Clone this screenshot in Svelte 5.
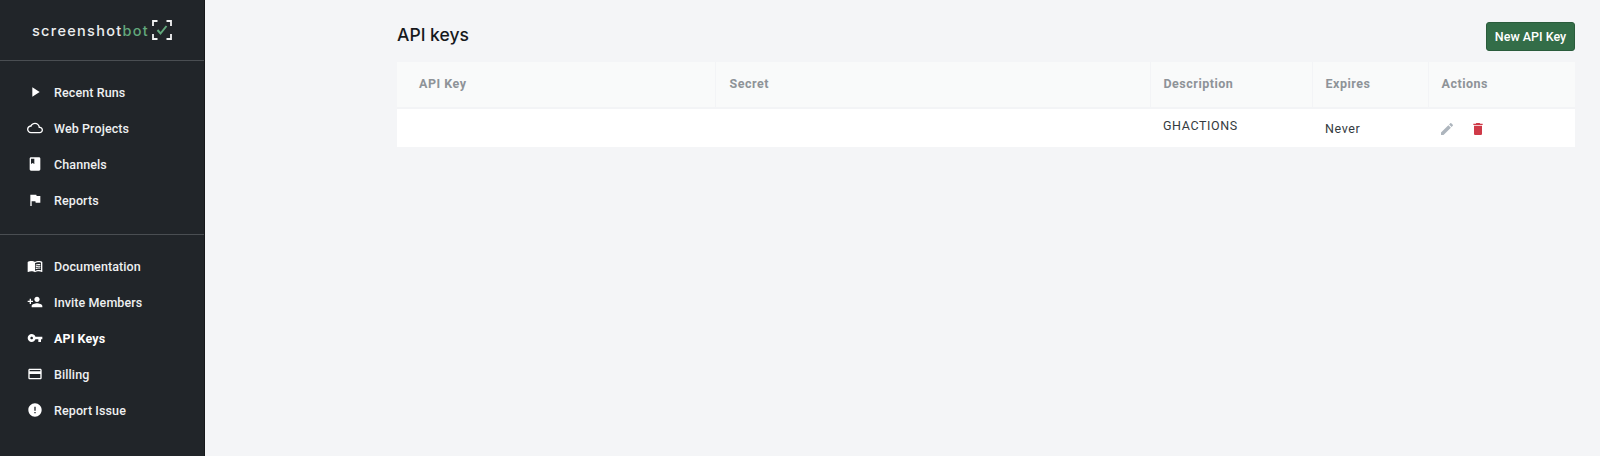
<script>
  const primaryNav = [
    { label: 'Recent Runs', icon: 'play' },
    { label: 'Web Projects', icon: 'cloud' },
    { label: 'Channels', icon: 'book' },
    { label: 'Reports', icon: 'flag' }
  ];
  const secondaryNav = [
    { label: 'Documentation', icon: 'docs' },
    { label: 'Invite Members', icon: 'invite' },
    { label: 'API Keys', icon: 'key', active: true },
    { label: 'Billing', icon: 'card' },
    { label: 'Report Issue', icon: 'alert' }
  ];
  const paths = {
    play: 'M8 5v14l11-7z',
    cloud: 'M19.35 10.04C18.67 6.59 15.64 4 12 4 9.11 4 6.6 5.64 5.35 8.04 2.34 8.36 0 10.91 0 14c0 3.31 2.69 6 6 6h13c2.76 0 5-2.24 5-5 0-2.64-2.05-4.78-4.65-4.96zM19 18H6c-2.21 0-4-1.79-4-4s1.79-4 4-4h.71C7.37 7.69 9.48 6 12 6c3.04 0 5.5 2.46 5.5 5.5v.5H19c1.66 0 3 1.34 3 3s-1.34 3-3 3z',
    book: 'M18 2H6c-1.1 0-2 .9-2 2v16c0 1.1.9 2 2 2h12c1.1 0 2-.9 2-2V4c0-1.1-.9-2-2-2zM6 4h5v8l-2.5-1.5L6 12V4z',
    flag: 'M14.4 6L14 4H5v17h2v-7h5.6l.4 2h7V6z',
    docs: 'M21 5c-1.11-.35-2.33-.5-3.5-.5-1.95 0-4.05.4-5.5 1.5-1.45-1.1-3.55-1.5-5.5-1.5S2.45 4.9 1 6v14.65c0 .25.25.5.5.5.1 0 .15-.05.25-.05C3.1 20.45 5.05 20 6.5 20c1.95 0 4.05.4 5.5 1.5 1.35-.85 3.8-1.5 5.5-1.5 1.65 0 3.35.3 4.75 1.05.1.05.15.05.25.05.25 0 .5-.25.5-.5V6c-.6-.45-1.25-.75-2-1zm0 13.5c-1.1-.35-2.3-.5-3.5-.5-1.7 0-4.15.65-5.5 1.5V8c1.35-.85 3.8-1.5 5.5-1.5 1.2 0 2.4.15 3.5.5v11.5zM17.5 10.5c.88 0 1.73.09 2.5.26V9.24c-.79-.15-1.64-.24-2.5-.24-1.7 0-3.24.29-4.5.83v1.66c1.13-.64 2.7-.99 4.5-.99zM13 12.49v1.66c1.13-.64 2.7-.99 4.5-.99.88 0 1.73.09 2.5.26V11.9c-.79-.15-1.64-.24-2.5-.24-1.7 0-3.24.3-4.5.83zM17.5 14.33c-1.7 0-3.24.29-4.5.83v1.66c1.13-.64 2.7-.99 4.5-.99.88 0 1.73.09 2.5.26v-1.52c-.79-.16-1.64-.24-2.5-.24z',
    invite: 'M15 12c2.21 0 4-1.79 4-4s-1.79-4-4-4-4 1.79-4 4 1.79 4 4 4zm-9-2V7H4v3H1v2h3v3h2v-3h3v-2H6zm9 4c-2.67 0-8 1.34-8 4v2h16v-2c0-2.66-5.33-4-8-4z',
    key: 'M12.65 10C11.83 7.67 9.61 6 7 6c-3.31 0-6 2.69-6 6s2.69 6 6 6c2.61 0 4.83-1.67 5.65-4H17v4h4v-4h2v-4H12.65zM7 14c-1.1 0-2-.9-2-2s.9-2 2-2 2 .9 2 2-.9 2-2 2z',
    card: 'M20 4H4c-1.11 0-1.99.89-1.99 2L2 18c0 1.11.89 2 2 2h16c1.11 0 2-.89 2-2V6c0-1.11-.89-2-2-2zm0 14H4v-6h16v6zm0-10H4V6h16v2z',
    alert: 'M12 2C6.48 2 2 6.48 2 12s4.48 10 10 10 10-4.48 10-10S17.52 2 12 2zm1 15h-2v-2h2v2zm0-4h-2V7h2v6z'
  };
  const columns = ['API Key', 'Secret', 'Description', 'Expires', 'Actions'];
</script>

{#snippet navList(items)}
  <ul>
    {#each items as item}
      <li class:active={item.active}>
        <svg viewBox="0 0 24 24"><path d={paths[item.icon]} /></svg>
        <span>{item.label}</span>
      </li>
    {/each}
  </ul>
{/snippet}

<div class="page">
  <aside>
    <div class="brand">
      <span class="wordmark">screenshot<em>bot</em></span>
      <svg class="logo" viewBox="0 0 20 20" width="20" height="20" fill="none">
        <path d="M5.5 1H1v5M14.5 1H19v5M5.5 19H1v-5M14.5 19H19v-5" stroke="#f2f3f3" stroke-width="1.8" />
        <path d="M5.5 10l3 3.5 6-7.5" stroke="#62a87c" stroke-width="2" />
      </svg>
    </div>
    <nav class="first">{@render navList(primaryNav)}</nav>
    <nav class="second">{@render navList(secondaryNav)}</nav>
  </aside>

  <main>
    <header>
      <h1>API keys</h1>
      <button>New API Key</button>
    </header>
    <table>
      <colgroup>
        <col class="c1" /><col class="c2" /><col class="c3" /><col class="c4" /><col />
      </colgroup>
      <thead>
        <tr>
          {#each columns as col}<th>{col}</th>{/each}
        </tr>
      </thead>
      <tbody>
        <tr>
          <td></td>
          <td></td>
          <td class="desc">GHACTIONS</td>
          <td>Never</td>
          <td class="actions">
            <svg viewBox="0 0 24 24" width="16" height="16" fill="#adb5bd"><path d="M3 17.25V21h3.75L17.81 9.94l-3.75-3.75L3 17.25zM20.71 7.04c.39-.39.39-1.02 0-1.41l-2.34-2.34c-.39-.39-1.02-.39-1.41 0l-1.83 1.83 3.75 3.75 1.83-1.83z" /></svg>
            <svg viewBox="0 0 24 24" width="16" height="16" fill="#cf3a48"><path d="M6 19c0 1.1.9 2 2 2h8c1.1 0 2-.9 2-2V7H6v12zM19 4h-3.5l-1-1h-5l-1 1H5v2h14V4z" /></svg>
          </td>
        </tr>
      </tbody>
    </table>
  </main>
</div>

<style>
  :global(body) {
    margin: 0;
    background: #f4f5f7;
  }

  .page {
    display: flex;
    height: 456px;
    font-family: Roboto, "Liberation Sans", sans-serif;
    overflow: hidden;
  }

  aside {
    width: 204px;
    flex: none;
    background: #212529;
    border-right: 1px solid #16181b;
    color: #fff;
  }

  .brand {
    height: 61px;
    box-sizing: border-box;
    border-bottom: 1px solid #4a4e52;
    display: flex;
    align-items: center;
    padding-left: 32px;
    gap: 3px;
  }

  .wordmark {
    font-family: Inter, sans-serif;
    font-size: 14.5px;
    font-weight: 500;
    letter-spacing: 1.3px;
    color: #eceeef;
  }

  .wordmark em {
    font-style: normal;
    color: #62a87c;
  }

  nav.first {
    height: 174px;
    box-sizing: border-box;
    padding-top: 13px;
    border-bottom: 1px solid #4a4e52;
  }

  nav.second {
    padding-top: 13px;
  }

  ul {
    list-style: none;
    margin: 0;
    padding: 0;
  }

  li {
    height: 36px;
    display: flex;
    align-items: center;
    padding-left: 27px;
    font-size: 12.5px;
    font-weight: 500;
    letter-spacing: 0.1px;
    color: #eef0f1;
  }

  li svg {
    fill: #fff;
    width: 16px;
    height: 16px;
    margin-right: 11px;
  }

  li.active span {
    font-weight: 700;
    color: #fff;
  }

  main {
    flex: 1;
    padding: 0 25px 0 192px;
    min-width: 0;
  }

  header {
    height: 62px;
    display: flex;
    align-items: center;
    justify-content: space-between;
  }

  h1 {
    margin: 6px 0 0;
    font-family: Inter, sans-serif;
    font-size: 17.5px;
    font-weight: 500;
    color: #16191c;
  }

  button {
    height: 29px;
    width: 89px;
    padding: 0;
    margin-top: 11px;
    background: #336d48;
    color: #fff;
    border: 1px solid #2a5c3c;
    border-radius: 3px;
    font: 500 12.5px Roboto, sans-serif;
  }

  table {
    width: 100%;
    table-layout: fixed;
    border-collapse: collapse;
    background: #fff;
    font-size: 12.5px;
  }

  .c1 { width: 318px; }
  .c2 { width: 435px; }
  .c3 { width: 162px; }
  .c4 { width: 116px; }

  th {
    height: 46px;
    box-sizing: border-box;
    padding: 0 0 2px 13px;
    text-align: left;
    background: #f9fafa;
    color: #8e9398;
    font-weight: 700;
    letter-spacing: 0.5px;
    border-left: 1px solid #f3f4f6;
    border-bottom: 2px solid #f3f4f6;
  }

  th:first-child {
    padding-left: 22px;
    border-left: none;
  }

  th:nth-child(2) {
    padding-left: 14px;
  }

  td {
    height: 39px;
    box-sizing: border-box;
    padding: 0 0 0 13px;
    color: #343a40;
    letter-spacing: 0.6px;
  }

  td.desc {
    padding-bottom: 6px;
  }

  td.actions {
    padding: 2px 0 0 11px;
    line-height: 0;
  }

  td.actions svg {
    vertical-align: middle;
    margin-right: 11px;
  }
</style>
